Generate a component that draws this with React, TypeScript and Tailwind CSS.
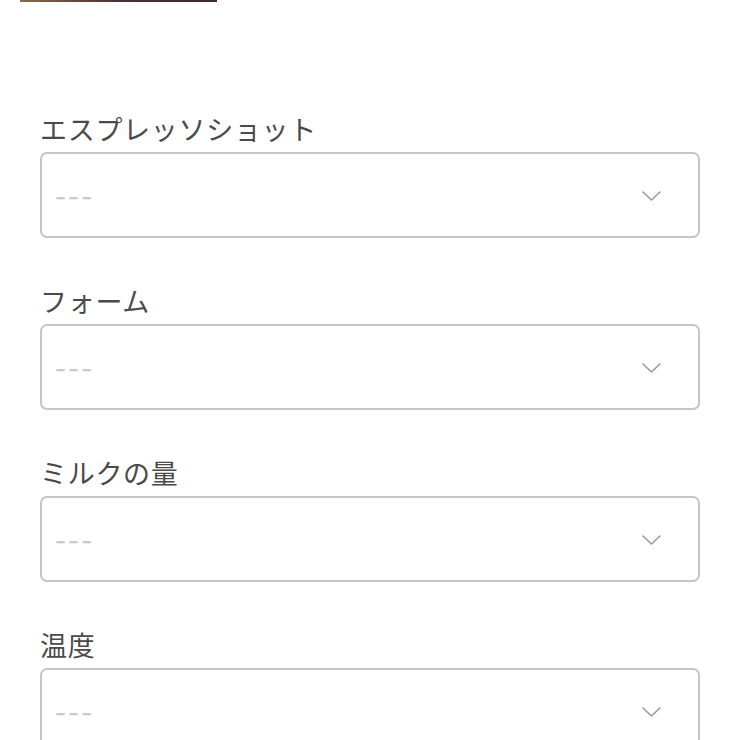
import React from "react";

const fields = ["エスプレッソショット", "フォーム", "ミルクの量", "温度"];

function Chevron() {
  return (
    <svg width="19" height="10" viewBox="0 0 19 10" fill="none" className="shrink-0 mt-[2px]">
      <path d="M1 1 L9.5 9 L18 1" stroke="#9a9a9a" strokeWidth="1.6" strokeLinecap="round" strokeLinejoin="round" />
    </svg>
  );
}

export default function App() {
  return (
    <div className="min-h-screen bg-white" style={{ fontFamily: '"Noto Sans CJK JP", "Noto Sans", sans-serif' }}>
      <div className="ml-[20px] w-[197px] h-[1.5px] bg-gradient-to-r from-[#8a6a4c] via-[#4a3232] to-[#3d2a2e]" />
      <div className="px-[40px] pt-[108px]">
        {fields.map((f) => (
          <div key={f} className="mb-[44px]">
            <div className="text-[27px] leading-[37px] tracking-[0.7px] text-[#4a4a4a] mb-[5px]">{f}</div>
            <div className="h-[86px] border-2 border-[#c6c6c6] rounded-[7px] flex items-center justify-between pl-[13px] pr-[37px]">
              <span className="text-[32px] leading-none text-[#cacaca] tracking-[2px] pb-[3px]">---</span>
              <Chevron />
            </div>
          </div>
        ))}
      </div>
    </div>
  );
}
